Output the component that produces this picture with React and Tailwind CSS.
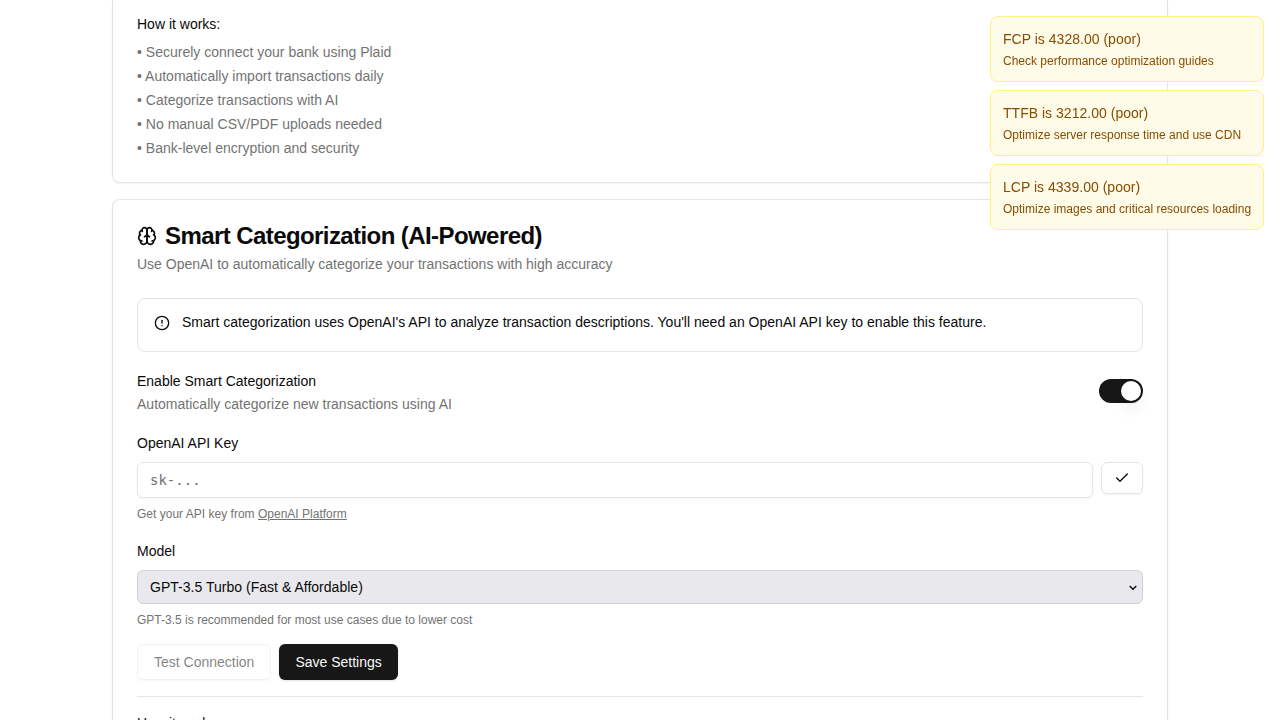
import React from 'react';
import { CircleAlert, Check } from 'lucide-react';

const steps = [
  'Securely connect your bank using Plaid',
  'Automatically import transactions daily',
  'Categorize transactions with AI',
  'No manual CSV/PDF uploads needed',
  'Bank-level encryption and security',
];

const warnings = [
  { title: 'FCP is 4328.00 (poor)', hint: 'Check performance optimization guides' },
  { title: 'TTFB is 3212.00 (poor)', hint: 'Optimize server response time and use CDN' },
  { title: 'LCP is 4339.00 (poor)', hint: 'Optimize images and critical resources loading' },
];

function BrainIcon({ className }) {
  return (
    <svg
      className={className}
      viewBox="0 0 24 24"
      fill="none"
      stroke="currentColor"
      strokeWidth="2"
      strokeLinecap="round"
      strokeLinejoin="round"
    >
      <path d="M12 5a3 3 0 1 0-5.997.125 4 4 0 0 0-2.526 5.77 4 4 0 0 0 .556 6.588A4 4 0 1 0 12 18Z" />
      <path d="M12 5a3 3 0 1 1 5.997.125 4 4 0 0 1 2.526 5.77 4 4 0 0 1-.556 6.588A4 4 0 1 1 12 18Z" />
      <path d="M15 13a4.5 4.5 0 0 1-3-4 4.5 4.5 0 0 1-3 4" />
      <path d="M17.599 6.5a3 3 0 0 0 .399-1.375" />
      <path d="M6.003 5.125A3 3 0 0 0 6.401 6.5" />
      <path d="M3.477 10.896a4 4 0 0 1 .585-.396" />
      <path d="M19.938 10.5a4 4 0 0 1 .585.396" />
      <path d="M6 18a4 4 0 0 1-1.967-.516" />
      <path d="M19.967 17.484A4 4 0 0 1 18 18" />
    </svg>
  );
}

function Card({ className, children }) {
  return <section className={'border-[#e5e5e5] bg-white px-6 shadow-xs ' + className}>{children}</section>;
}

function Label({ children }) {
  return <label className="block h-6 pt-[3px] text-sm">{children}</label>;
}

function Field({ label, hint, children }) {
  return (
    <div className="flex flex-col gap-2">
      <Label>{label}</Label>
      {children}
      <p className="text-xs tracking-[0.01px] text-[#737373]">{hint}</p>
    </div>
  );
}

function Switch() {
  return (
    <button
      type="button"
      role="switch"
      aria-checked="true"
      className="flex h-6 w-11 items-center justify-end rounded-full bg-[#171717] px-0.5"
    >
      <span className="size-5 rounded-full bg-white shadow-lg" />
    </button>
  );
}

export default function App() {
  return (
    <div className="h-screen overflow-hidden bg-white font-['Liberation_Sans',Arial,sans-serif] text-base text-[#0a0a0a]">
      <main className="mx-auto flex w-[1056px] flex-col gap-4">
        <Card className="rounded-b-lg border-x border-b pt-3.5 pb-6">
          <h4 className="text-sm">How it works:</h4>
          <ul className="mt-2 flex flex-col gap-1 text-sm tracking-[0.01px] text-[#737373]">
            {steps.map((s) => (
              <li key={s}>• {s}</li>
            ))}
          </ul>
        </Card>

        <Card className="rounded-t-lg border-x border-t pt-6">
          <h2 className="flex items-center gap-2 text-2xl leading-none font-semibold tracking-[-0.58px]">
            <BrainIcon className="size-5" />
            Smart Categorization (AI-Powered)
          </h2>
          <p className="mt-1.5 text-sm text-[#737373]">
            Use OpenAI to automatically categorize your transactions with high accuracy
          </p>

          <div className="mt-6 flex flex-col gap-4">
            <div className="flex h-[54px] gap-3 rounded-lg border border-[#e5e5e5] px-4 pt-3">
              <CircleAlert className="mt-1 size-4 shrink-0" />
              <p className="text-sm leading-[22.75px] tracking-[0.01px]">
                Smart categorization uses OpenAI's API to analyze transaction descriptions. You'll need an OpenAI API key to enable this feature.
              </p>
            </div>

            <div className="flex items-center justify-between">
              <div className="flex flex-col gap-0.5">
                <Label>Enable Smart Categorization</Label>
                <p className="text-sm tracking-[0.01px] text-[#737373]">Automatically categorize new transactions using AI</p>
              </div>
              <Switch />
            </div>

            <Field
              label="OpenAI API Key"
              hint={<>Get your API key from <a className="underline">OpenAI Platform</a></>}
            >
              <div className="flex items-start gap-2">
                <input
                  className="h-9 min-w-0 flex-1 rounded-md border border-[#e5e5e5] px-3 py-1 font-['DejaVu_Sans_Mono',monospace] text-sm shadow-xs placeholder:text-[#737373]"
                  placeholder="sk-..."
                />
                <button
                  type="button"
                  aria-label="Verify key"
                  className="flex h-8 w-[42px] items-center justify-center rounded-md border border-[#e5e5e5] shadow-xs"
                >
                  <Check className="size-4" />
                </button>
              </div>
            </Field>

            <Field label="Model" hint="GPT-3.5 is recommended for most use cases due to lower cost">
              <div className="flex h-[34px] items-center justify-between rounded-md border border-[#d1d1d8] bg-[#e9e9ed] pr-[5px] pl-3 text-sm tracking-[0.02px]">
                <span>GPT-3.5 Turbo (Fast &amp; Affordable)</span>
                <svg className="mt-px" width="8" height="6" viewBox="0 0 8 6" fill="none" stroke="currentColor" strokeWidth="1.3">
                  <path d="M0.7 1L4 4.3L7.3 1" />
                </svg>
              </div>
            </Field>

            <div className="flex gap-2">
              <button type="button" className="h-9 rounded-md border border-[#e5e5e5] px-4 text-sm opacity-50 shadow-xs">
                Test Connection
              </button>
              <button type="button" className="h-9 rounded-md bg-[#171717] px-4 text-sm text-[#fafafa] shadow-sm">
                Save Settings
              </button>
            </div>

            <div className="border-t border-[#e5e5e5] pt-4">
              <h4 className="text-sm">How it works:</h4>
            </div>
          </div>
        </Card>
      </main>

      <aside className="fixed top-4 right-4 flex w-[274px] flex-col gap-2">
        {warnings.map((w) => (
          <div key={w.title} className="rounded-lg border border-[#fff085] bg-[#fefce8] p-3 text-[#894b00]">
            <p className="text-sm tracking-[0.02px]">{w.title}</p>
            <p className="mt-1 text-xs whitespace-nowrap">{w.hint}</p>
          </div>
        ))}
      </aside>
    </div>
  );
}
